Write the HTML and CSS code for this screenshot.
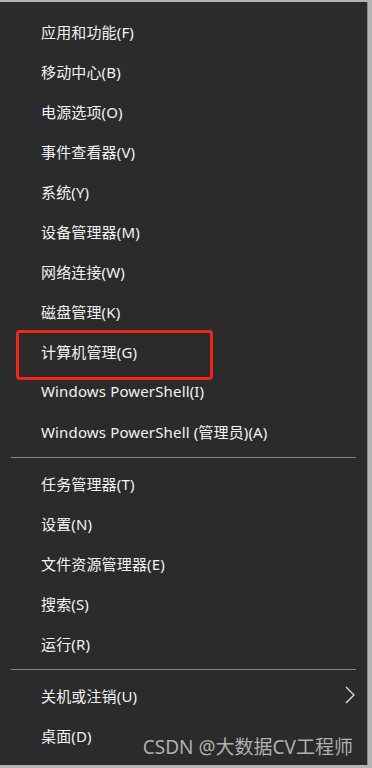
FILE: index.html
```html
<!DOCTYPE html>
<html lang="zh-CN">
<head>
<meta charset="utf-8">
<link rel="stylesheet" href="styles.css">
</head>
<body>
<div class="menu">
  <div class="group">
    <div class="item">应用和功能(F)</div>
    <div class="item">移动中心(B)</div>
    <div class="item">电源选项(O)</div>
    <div class="item">事件查看器(V)</div>
    <div class="item">系统(Y)</div>
    <div class="item">设备管理器(M)</div>
    <div class="item">网络连接(W)</div>
    <div class="item">磁盘管理(K)</div>
    <div class="item">计算机管理(G)</div>
    <div class="item">Windows PowerShell(I)</div>
    <div class="item">Windows PowerShell (管理员)(A)</div>
  </div>
  <div class="sep"></div>
  <div class="group">
    <div class="item">任务管理器(T)</div>
    <div class="item">设置(N)</div>
    <div class="item">文件资源管理器(E)</div>
    <div class="item">搜索(S)</div>
    <div class="item">运行(R)</div>
  </div>
  <div class="sep"></div>
  <div class="group">
    <div class="item item-sub">关机或注销(U)
      <svg class="chev" width="10" height="18" viewBox="0 0 10 18"><path d="M1 1 L9 9 L1 17" fill="none" stroke="#e8e8e8" stroke-width="1.2"/></svg>
    </div>
    <div class="item">桌面(D)</div>
  </div>
  <div class="highlight"></div>
  <div class="watermark">CSDN @大数据CV工程师</div>
</div>
</body>
</html>
```
FILE: styles.css
```css
html, body {
  margin: 0;
  padding: 0;
}
body {
  background: #b4b4b4;
  width: 372px;
  height: 768px;
  overflow: hidden;
  font-family: "Noto Sans", "Noto Sans CJK SC", sans-serif;
}
.menu {
  position: relative;
  margin-top: 2px;
  width: 368px;
  height: 763px;
  background: #2b2b2b;
  box-sizing: border-box;
  padding-top: 9px;
  border-right: 1px solid #8a8a8a;
}
.group {
  display: flex;
  flex-direction: column;
}
.item {
  height: 40px;
  display: flex;
  align-items: center;
  padding-left: 41px;
  color: #f2f2f2;
  font-size: 15px;
  letter-spacing: 0.15px;
  position: relative;
}
.item-sub {
  justify-content: space-between;
  padding-right: 12px;
}
.chev {
  display: block;
}
.sep {
  height: 12px;
  display: flex;
  align-items: center;
  padding: 0 11px;
}
.sep::before {
  content: "";
  flex: 1;
  height: 1px;
  background: #858585;
}
.highlight {
  position: absolute;
  left: 16px;
  top: 328px;
  width: 191px;
  height: 44px;
  border: 3px solid #f2251a;
  border-radius: 4px;
}
.watermark {
  position: absolute;
  right: 14px;
  top: 732px;
  font-size: 19px;
  color: rgba(215, 215, 215, 0.78);
  font-family: "Noto Sans", "Noto Sans CJK SC", sans-serif;
  line-height: 26px;
}
```
